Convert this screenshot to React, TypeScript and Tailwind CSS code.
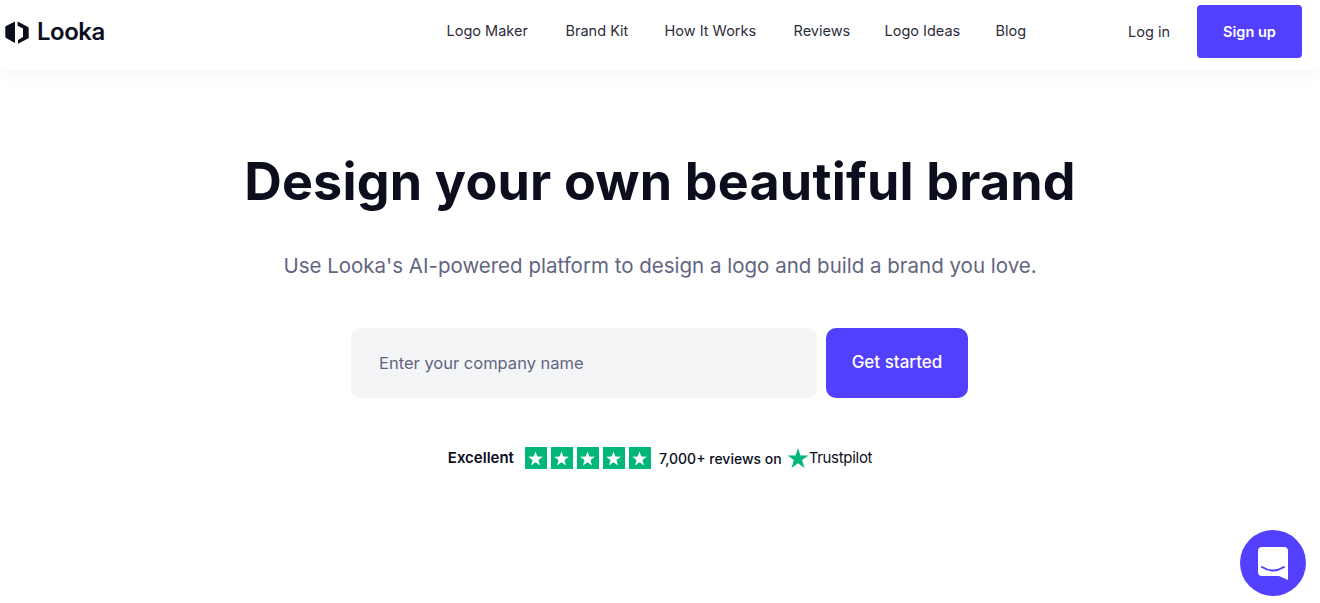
const navLinks = [
  { label: "Logo Maker", width: "w-[84px]" },
  { label: "Brand Kit", width: "w-[64px]" },
  { label: "How It Works", width: "w-[94px]" },
  { label: "Reviews", width: "w-[56px]" },
  { label: "Logo Ideas", width: "w-[76px]" },
  { label: "Blog", width: "w-[31px]" },
];

function LogoMark() {
  return (
    <svg width="24" height="23" viewBox="0 0 24 23" fill="#0c0e1e">
      <path d="M10 0.5 L10 22 L1 17 Q0.3 16.6 0.3 15.8 L0.3 6.2 Q0.3 5.4 1 5 Z" />
      <path d="M12.6 0.5 L23 6 Q23.7 6.4 23.7 7.2 L23.7 16.4 Q23.7 17.2 23 17.6 L13 22.8 L13 19 L18 16 L18 7.6 L12.6 4.8 Z" />
    </svg>
  );
}

function StarBox() {
  return (
    <div className="flex h-[22px] w-[22px] items-center justify-center bg-[#00b67a]">
      <svg width="17" height="17" viewBox="0 0 24 24" fill="#ffffff">
        <path d="M12 2 L14.6 9.2 L22.4 9.4 L16.2 14.2 L18.4 21.8 L12 17.4 L5.6 21.8 L7.8 14.2 L1.6 9.4 L9.4 9.2 Z" />
      </svg>
    </div>
  );
}

export default function App() {
  return (
    <div className="relative h-[603px] w-full overflow-hidden bg-white font-['Inter',sans-serif]">
      <header className="flex h-[70px] items-start justify-between bg-white pl-[5px] pr-[18px] shadow-[0_4px_16px_rgba(12,14,30,0.04)]">
        <div className="flex h-[64px] w-[340px] items-center gap-[8px]">
          <LogoMark />
          <span className="text-[24px] font-semibold leading-none tracking-[-0.5px] text-[#0c0e1e]">Looka</span>
        </div>
        <nav className="flex h-[62px] items-center gap-[35px]">
          {navLinks.map((link) => (
            <a key={link.label} className={`${link.width} whitespace-nowrap text-[14.5px] text-[#2b2d3a]`}>
              {link.label}
            </a>
          ))}
        </nav>
        <div className="flex items-center gap-[27px] pt-[5px]">
          <a className="text-[14.5px] text-[#2b2d3a]">Log in</a>
          <button className="h-[53px] w-[105px] rounded-[4px] bg-[#5340ff] text-[14.5px] font-semibold text-white">
            Sign up
          </button>
        </div>
      </header>

      <main className="flex flex-col items-center">
        <h1 className="mt-[79px] text-[52px] font-bold leading-[66px] tracking-[0.2px] text-[#0c0e1e]">
          Design your own beautiful brand
        </h1>
        <p className="mt-[35px] text-[20.5px] leading-[32px] text-[#62657f]">
          Use Looka's AI-powered platform to design a logo and build a brand you love.
        </p>
        <form className="mt-[46px] flex gap-[9px] pr-[1px]">
          <div className="flex h-[70px] w-[466px] items-center rounded-[10px] bg-[#f4f5f7] pl-[28px] text-[16.5px] text-[#62657f]">
            Enter your company name
          </div>
          <button type="button" className="h-[70px] w-[142px] rounded-[10px] bg-[#5340ff] text-[17px] font-medium text-white">
            Get started
          </button>
        </form>
        <div className="mt-[47px] flex h-[26px] items-center text-[#0c0e1e]">
          <span className="mr-[11px] text-[15px] font-semibold">Excellent</span>
          <div className="mr-[8px] flex gap-[4px]">
            <StarBox />
            <StarBox />
            <StarBox />
            <StarBox />
            <StarBox />
          </div>
          <span className="mr-[5px] text-[14px] font-medium">7,000+ reviews on</span>
          <svg width="22" height="22" viewBox="0 0 24 24" fill="#00b67a">
            <path d="M12 1 L14.7 9.2 L23.5 9.2 L16.4 14.3 L19.1 22.8 L12 17.6 L4.9 22.8 L7.6 14.3 L0.5 9.2 L9.3 9.2 Z" />
          </svg>
          <span className="text-[15px] tracking-[-0.3px]">Trustpilot</span>
        </div>
      </main>

      <div className="absolute bottom-[7px] right-[14px] flex h-[66px] w-[66px] items-center justify-center rounded-full bg-[#5340ff]">
        <svg width="30" height="33" viewBox="0 0 30 33">
          <path d="M4 0 H26 Q30 0 30 4 V33 L21 29 H4 Q0 29 0 25 V4 Q0 0 4 0 Z" fill="#ffffff" />
          <path d="M4 20 Q15 27 26 20" fill="none" stroke="#5340ff" strokeWidth="2" strokeLinecap="round" />
        </svg>
      </div>
    </div>
  );
}
